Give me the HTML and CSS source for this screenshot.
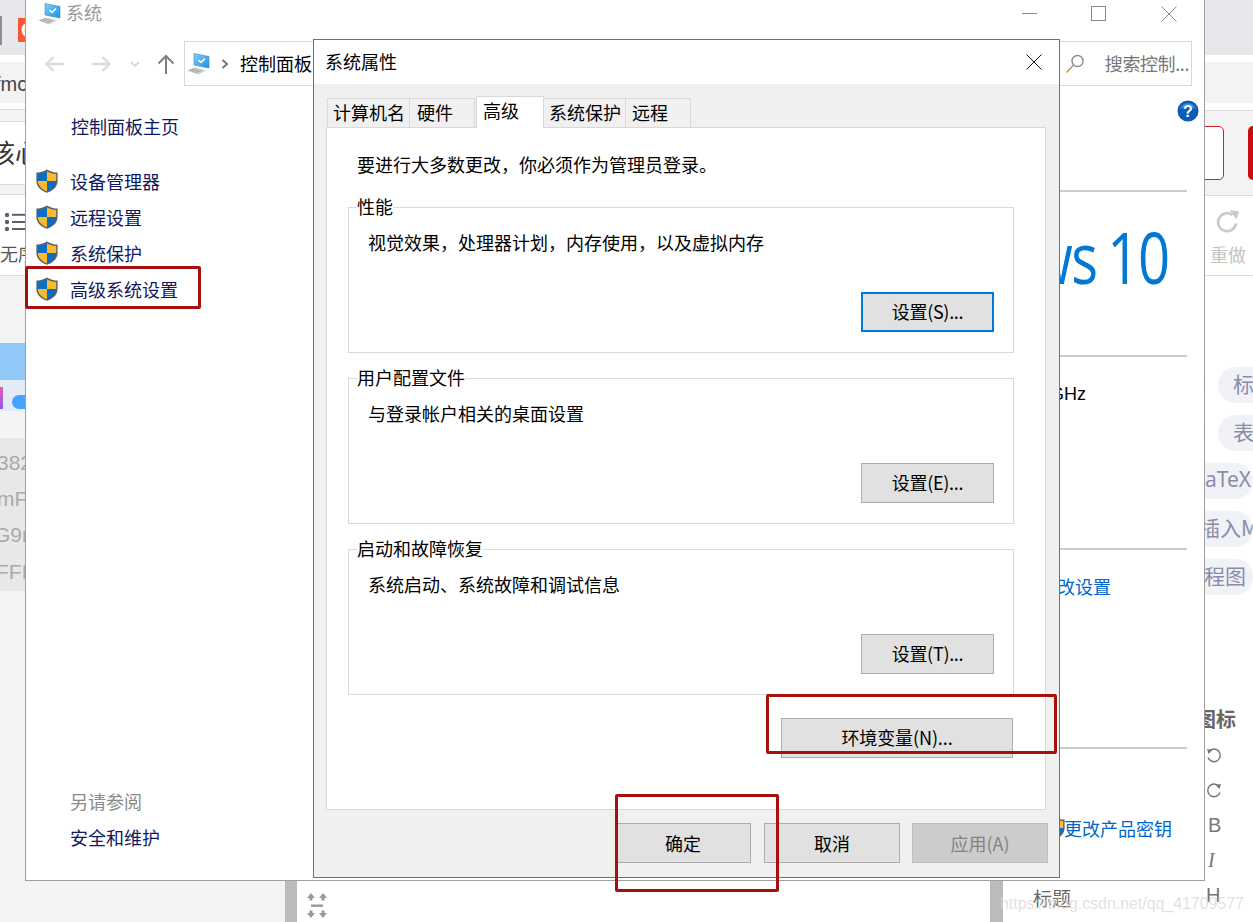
FILE: index.html
```html
<!DOCTYPE html>
<html lang="zh-CN">
<head>
<meta charset="utf-8">
<title>系统属性</title>
<link rel="stylesheet" href="styles.css">
</head>
<body>
<svg class="defs" width="0" height="0" aria-hidden="true">
  <defs>
    <linearGradient id="screen" x1="0" y1="0" x2="1" y2="1"><stop offset="0" stop-color="#7fd0fb"/><stop offset="1" stop-color="#1f8fe0"/></linearGradient>
    <symbol id="shield" viewBox="0 0 22 24">
      <path d="M11 .5C14 2.6 18 3.6 21.6 3.6V12C21.6 18 16.5 22 11 23.8 5.500 22 .4 18 .4 12V3.600C4 3.600 8 2.600 11 .5Z" fill="#5b5f66"/>
      <path d="M11 2.200C8.300 4 4.800 4.900 1.800 5V12H11Z" fill="#0a6ec4"/>
      <path d="M11 2.200C13.700 4 17.200 4.900 20.200 5V12H11Z" fill="#fbb92e"/>
      <path d="M1.800 12C1.900 17 6.500 20.800 11 22.300V12Z" fill="#fbb92e"/>
      <path d="M20.200 12C20.100 17 15.500 20.800 11 22.300V12Z" fill="#0a6ec4"/>
    </symbol>
    <symbol id="pc" viewBox="0 0 24 22">
      <path d="M1 17.500 9 14.500 20 17.500 12 21.500Z" fill="#c9ced2"/>
      <path d="M3 17.500 9 15.500 M6 18.500 12 16.500 M9 19.500 15 17.500" stroke="#8f979c" stroke-width=".8" fill="none"/>
      <path d="M8 .5 23 3.500V15L8 12Z" fill="url(#screen)" stroke="#3f86bd" stroke-width=".6"/>
      <path d="M12.500 7 15 9.500 19 5.500" stroke="#fff" stroke-width="1.500" fill="none"/>
    </symbol>
  </defs>
</svg>

<div class="backdrop">
  <div class="left-pane">
    <div class="band band-top">
      <span class="tab-edge"></span>
      <span class="app-badge">C</span>
    </div>
    <div class="band band-gap"></div>
    <div class="band band-url"><span class="url-text">fmc</span></div>
    <div class="band band-gap-line"></div>
    <div class="band band-thin"></div>
    <div class="band band-title"><span class="title-text">核心</span></div>
    <div class="band band-sep"></div>
    <div class="band band-tools">
      <svg class="list-icon" width="22" height="22" viewBox="0 0 22 22"><g fill="#5d6070"><circle cx="3" cy="4" r="2.200"/><circle cx="3" cy="11" r="2.200"/><circle cx="3" cy="18" r="2.200"/><rect x="8" y="2.800" width="14" height="2"/><rect x="8" y="10" width="14" height="2"/><rect x="8" y="17" width="14" height="2"/></g></svg>
      <span class="tool-label">无序</span>
    </div>
    <div class="band band-pale"></div>
    <div class="pic">
      <div class="pic-sky"></div>
      <div class="pic-notes"><span class="note-a"></span><span class="note-b"></span></div>
    </div>
    <div class="band band-pale-2"></div>
    <div class="code">
      <div class="code-line">382</div>
      <div class="code-line">mF</div>
      <div class="code-line code-g">G9r</div>
      <div class="code-line code-f">FFF</div>
    </div>
  </div>
  <div class="scrollbar"></div>
  <div class="center-pane">
    <svg class="fit-icon" width="22" height="26" viewBox="0 0 22 26"><g fill="#999"><path d="M5 0 9 5H6.500V7.500H3.500V5H1Z"/><path d="M17 0 21 5H18.500V7.500H15.500V5H13Z"/><rect x="5" y="11.500" width="12" height="2.400"/><path d="M5 25 9 20H6.500V17.500H3.500V20H1Z"/><path d="M17 25 21 20H18.500V17.500H15.500V20H13Z"/></g></svg>
  </div>
  <div class="scrollbar scrollbar-r"></div>
  <div class="right-pane">
    <div class="rband rband-top"></div>
    <div class="rband rband-gap"></div>
    <div class="rband rband-url"></div>
    <div class="rband rband-gap2"></div>
    <div class="rband rband-actions">
      <span class="btn-outline"></span>
      <span class="btn-solid"></span>
    </div>
    <div class="rband rband-tools">
      <svg class="redo" width="24" height="24" viewBox="0 0 24 24"><path d="M20 13.500A9 9 0 1 1 16.500 5" fill="none" stroke="#c8cad0" stroke-width="2.600"/><path d="M13.500 0 23 1.500 20.500 9.500Z" fill="#c8cad0"/></svg>
      <span class="redo-label">重做</span>
    </div>
    <div class="pills">
      <div class="pill-row"><span class="pill pill-blank"></span><span class="pill pill-short">标题</span></div>
      <div class="pill-row"><span class="pill pill-blank"></span><span class="pill pill-short">表格</span></div>
      <div class="pill-row"><span class="pill pill-wide pill-latex">LaTeX</span></div>
      <div class="pill-row"><span class="pill pill-wide pill-insert">插入Mermaid</span></div>
      <div class="pill-row"><span class="pill pill-wide pill-flow">流程图</span></div>
    </div>
    <div class="icon-head">图标</div>
    <ul class="icon-list">
      <li><svg width="16" height="16" viewBox="0 0 16 16"><path d="M3 3.500A6.300 6.300 0 1 1 2 9.500" fill="none" stroke="#777" stroke-width="1.500"/><path d="M1 1 6.500 2 2.500 6Z" fill="#777"/></svg></li>
      <li><svg width="16" height="16" viewBox="0 0 16 16"><path d="M13 3.500A6.300 6.300 0 1 0 14 9.500" fill="none" stroke="#777" stroke-width="1.500"/><path d="M15 1 9.500 2 13.500 6Z" fill="#777"/></svg></li>
      <li class="glyph">B</li>
      <li class="glyph glyph-i">I</li>
    </ul>
    <div class="last-row"><span class="last-title">标题</span><span class="glyph last-h">H</span></div>
  </div>
</div>

<section class="window">
  <header class="win-title">
    <div class="win-name">
      <svg class="pc-small" width="24" height="22"><use href="#pc"/></svg>
      <span>系统</span>
    </div>
    <div class="win-controls">
      <span class="ctl ctl-min"></span>
      <span class="ctl ctl-max"></span>
      <svg class="ctl-close" width="16" height="16" viewBox="0 0 16 16"><path d="M.5.500 15.500 15.500M15.500.500.500 15.500" stroke="#8a8a8a" fill="none"/></svg>
    </div>
  </header>
  <nav class="win-nav">
    <div class="nav-btns">
      <svg width="20" height="18" viewBox="0 0 20 18"><path d="M19 9H2M8.500 2 1.500 9 8.500 16" fill="none" stroke="#dcdcdc" stroke-width="2.400"/></svg>
      <svg class="nav-fwd" width="20" height="18" viewBox="0 0 20 18"><path d="M1 9H18M11.500 2 18.500 9 11.500 16" fill="none" stroke="#dcdcdc" stroke-width="2.400"/></svg>
      <svg class="nav-down" width="10" height="6" viewBox="0 0 10 6"><path d="M1 1 5 5 9 1" fill="none" stroke="#dcdcdc" stroke-width="2"/></svg>
      <svg class="nav-up" width="18" height="20" viewBox="0 0 18 20"><path d="M9 20V2M1.500 9.500 9 2 16.500 9.500" fill="none" stroke="#808080" stroke-width="2"/></svg>
    </div>
    <div class="addr">
      <svg width="24" height="22"><use href="#pc"/></svg>
      <svg class="addr-chev" width="8" height="10" viewBox="0 0 8 10"><path d="M1.500 1 6 5 1.500 9" fill="none" stroke="#777" stroke-width="2"/></svg>
      <span class="addr-text">控制面板</span>
    </div>
    <div class="search">
      <svg width="20" height="20" viewBox="0 0 20 20"><circle cx="12.500" cy="7" r="5.500" fill="none" stroke="#8b8b8b" stroke-width="1.400"/><path d="M8.500 11 1.500 18.500" stroke="#c98a4c" stroke-width="1.400"/></svg>
      <span class="search-text">搜索控制...</span>
    </div>
  </nav>
  <div class="win-body">
    <aside class="side">
      <a class="side-home">控制面板主页</a>
      <ul class="side-list">
        <li><svg width="22" height="24"><use href="#shield"/></svg>设备管理器</li>
        <li><svg width="22" height="24"><use href="#shield"/></svg>远程设置</li>
        <li><svg width="22" height="24"><use href="#shield"/></svg>系统保护</li>
        <li><svg width="22" height="24"><use href="#shield"/></svg>高级系统设置</li>
      </ul>
      <div class="side-foot">
        <div class="foot-head">另请参阅</div>
        <div class="foot-link">安全和维护</div>
      </div>
    </aside>
    <div class="info">
      <div class="info-sec info-help">
        <svg class="help" width="22" height="22" viewBox="0 0 22 22"><circle cx="11" cy="11" r="10.500" fill="#0a5cb5"/><path d="M3 9A8.500 8.500 0 0 1 19 9C14 6.500 8 6.500 3 9Z" fill="#3e8bdc"/><text x="11" y="17" text-anchor="middle" class="help-q">?</text></svg>
      </div>
      <div class="info-sec info-logo"><span class="logo-text">ws<span class="logo-num">10</span></span></div>
      <div class="info-sec info-cpu"><span class="ghz">GHz</span></div>
      <div class="info-sec info-name"><a class="change-link">更改设置</a></div>
      <div class="info-last">
        <svg class="key-shield" width="22" height="24"><use href="#shield"/></svg>
        <a class="key-link">更改产品密钥</a>
      </div>
    </div>
  </div>
</section>

<section class="dialog">
  <header class="dlg-title">
    <span class="dlg-name">系统属性</span>
    <svg width="16" height="16" viewBox="0 0 16 16"><path d="M.5.500 15.500 15.500M15.500.500.500 15.500" stroke="#111" fill="none"/></svg>
  </header>
  <div class="dlg-body">
    <div class="tabs">
      <span class="tab tab-first">计算机名</span>
      <span class="tab tab-hw">硬件</span>
      <span class="tab tab-active">高级</span>
      <span class="tab tab-sys">系统保护</span>
      <span class="tab tab-remote">远程</span>
    </div>
    <div class="panel">
      <p class="admin-note">要进行大多数更改，你必须作为管理员登录。</p>
      <div class="group group-first">
        <div class="legend">性能</div>
        <p class="desc">视觉效果，处理器计划，内存使用，以及虚拟内存</p>
        <button class="btn btn-group btn-focus">设置(S)...</button>
      </div>
      <div class="group">
        <div class="legend">用户配置文件</div>
        <p class="desc">与登录帐户相关的桌面设置</p>
        <button class="btn btn-group">设置(E)...</button>
      </div>
      <div class="group">
        <div class="legend">启动和故障恢复</div>
        <p class="desc">系统启动、系统故障和调试信息</p>
        <button class="btn btn-group">设置(T)...</button>
      </div>
      <div class="env-row"><button class="btn btn-env">环境变量(N)...</button></div>
    </div>
    <div class="dlg-foot">
      <button class="btn btn-foot">确定</button>
      <button class="btn btn-foot">取消</button>
      <button class="btn btn-foot btn-disabled">应用(A)</button>
    </div>
  </div>
</section>

<div class="mark mark-side"></div>
<div class="mark mark-env"></div>
<div class="mark mark-ok"></div>
<div class="watermark">https://blog.csdn.net/qq_41709577</div>
</body>
</html>
```
FILE: styles.css
```css
* { box-sizing: border-box; }
html, body { margin: 0; padding: 0; }
body {
  width: 1253px;
  height: 922px;
  position: relative;
  overflow: hidden;
  background: #fff;
  color: #000;
  font-family: "Noto Sans CJK SC", "Noto Sans", sans-serif;
  font-size: 18px;
  line-height: 26px;
}
p { margin: 0; }
ul { margin: 0; padding: 0; list-style: none; }
.defs { position: absolute; }

/* page behind the windows */
.backdrop { display: grid; grid-template-columns: 285px 12px 693px 13px 250px; height: 922px; }
.left-pane { background: #f4f4f4; overflow: hidden; }
.scrollbar { background: #bbb; }
.center-pane { background: #fff; padding: 893px 0 0 9px; }
.fit-icon { display: block; }
.right-pane { background: #fff; overflow: hidden; }

.band { width: 25px; overflow: hidden; }
.band-top { height: 55px; background: #e6e8eb; position: relative; display: flex; justify-content: space-between; padding-top: 16px; }
.tab-edge { width: 2px; height: 29px; background: #8c8c8c; }
.app-badge { width: 7px; height: 24px; margin-top: 2px; background: #fc5531; color: #fff; font: 700 20px/24px "Liberation Sans", sans-serif; text-indent: 3px; overflow: hidden; }
.band-gap { height: 7px; background: #fff; }
.band-url { height: 41px; background: #f3f3f3; }
.url-text { display: block; font: 20px/44px "Liberation Sans", sans-serif; color: #444; margin-left: -5px; white-space: nowrap; }
.band-gap-line { height: 7px; background: #fff; border-bottom: 1px solid #ddd; }
.band-thin { height: 12px; background: #f3f3f3; border-bottom: 1px solid #ddd; }
.band-title { height: 62px; background: #fff; }
.title-text { display: block; margin-left: -11px; font-size: 26px; line-height: 60px; color: #333; white-space: nowrap; }
.band-sep { height: 11px; background: #f3f3f3; border-top: 1px solid #ddd; border-bottom: 1px solid #ddd; }
.band-tools { height: 80px; background: #fff; padding: 16px 0 0 4px; }
.list-icon { display: block; }
.tool-label { display: block; margin: 8px 0 0 -4px; font-size: 18px; line-height: 24px; color: #555; white-space: nowrap; }
.band-pale { height: 65px; background: #f3f3f3; border-top: 1px solid #ddd; }
.pic { width: 25px; height: 68px; margin-top: 3px; overflow: hidden; background: #e3ecf6; }
.pic-sky { height: 37px; background: #90c8f8; }
.pic-notes { display: flex; justify-content: space-between; align-items: flex-end; height: 31px; padding-bottom: 2px; }
.note-a { width: 3px; height: 22px; background: linear-gradient(#e85ab0, #8a5cf0); }
.note-b { width: 13px; height: 14px; margin-right: 0; background: #46a3fb; border-radius: 8px 0 0 8px; }
.band-pale-2 { height: 27px; width: 25px; }
.code { width: 25px; height: 153px; background: #e8e8e8; overflow: hidden; padding-top: 7px; }
.code-line { height: 36.200px; font: 21px/36px "Liberation Sans", sans-serif; color: #aaa; white-space: nowrap; margin-left: -3px; }
.code-g { margin-left: -6px; }
.code-f { margin-left: -4px; }

.rband { width: 100%; }
.rband-top { height: 55px; background: #e6e8eb; }
.rband-gap { height: 7px; }
.rband-url { height: 41px; background: #f3f3f3; }
.rband-gap2 { height: 8px; border-bottom: 1px solid #ddd; }
.rband-actions { height: 85px; background: #f3f3f3; border-bottom: 1px solid #ddd; padding: 15px 0 0 147px; display: flex; gap: 24px; }
.btn-outline { flex: none; width: 74px; height: 54px; background: #fff; border: 1px solid #d0202e; border-radius: 5px; }
.btn-solid { flex: none; width: 40px; height: 54px; background: #ca0c16; border-radius: 5px; }
.rband-tools { height: 80px; border-bottom: 1px solid #ddd; padding: 14px 0 0 213px; position: relative; }
.redo { display: block; }
.redo-label { display: block; margin: 7px 0 0 -6px; color: #c4c4c4; font-size: 18px; line-height: 26px; white-space: nowrap; }
.pills { display: flex; flex-direction: column; gap: 12px; margin-top: 91px; }
.pill-row { display: flex; gap: 12px; height: 36px; padding-left: 97px; }
.pill { flex: none; height: 36px; background: #f0f2f7; color: #8a8da8; border-radius: 18px; font-size: 21px; line-height: 33px; white-space: nowrap; overflow: hidden; }
.pill-blank { width: 106px; background: #f7f8fb; }
.pill-short { width: 80px; padding-left: 15px; }
.pill-wide { width: 153px; }
.pill-latex { padding-left: 94px; font-family: "Noto Sans", sans-serif; }
.pill-insert { padding-left: 99px; }
.pill-flow { padding-left: 83px; }
.icon-head { margin: 112px 0 0 193px; font-size: 20px; font-weight: 700; line-height: 24px; color: #666; white-space: nowrap; }
.icon-list { margin: 7px 0 0 203px; }
.icon-list li { height: 35px; display: flex; align-items: center; }
.glyph { font: 20px/35px "Liberation Sans", sans-serif; color: #777; padding-left: 2px; }
.glyph-i { font-family: "Liberation Serif", serif; font-style: italic; }
.last-row { display: flex; padding-left: 30px; height: 30px; margin-top: 4px; }
.last-title { font-size: 19px; line-height: 32px; color: #666; }
.last-h { margin-left: 133px; line-height: 26px; }

/* control panel window */
.window {
  position: absolute; left: 25px; top: 0;
  width: 1180px; height: 881px;
  background: #fff;
  border: 1px solid #a0a0a0;
  border-top: 0;
  display: flex; flex-direction: column;
}
.win-title { height: 41px; flex: none; display: flex; justify-content: space-between; padding: 0 27px 0 11px; }
.win-name { display: flex; gap: 5px; color: #999; font-size: 18px; line-height: 24px; align-items: flex-start; }
.pc-small { margin-top: 3px; }
.win-controls { display: flex; align-items: flex-start; padding-top: 6px; }
.ctl { display: block; flex: none; }
.ctl-min { width: 15px; height: 1px; background: #8a8a8a; margin-top: 7px; }
.ctl-max { width: 15px; height: 15px; border: 1px solid #8a8a8a; margin-left: 54px; }
.ctl-close { margin-left: 55px; }
.win-nav { height: 45px; flex: none; display: flex; padding: 0 12px 0 19px; }
.nav-btns { display: flex; align-items: center; width: 139px; flex: none; }
.nav-fwd { margin-left: 26px; }
.nav-down { margin-left: 19px; }
.nav-up { margin-left: 17px; }
.addr { flex: 1; border: 1px solid #d9d9d9; display: flex; align-items: center; padding-left: 1px; line-height: 26px; font-size: 18px; }
.addr-chev { margin: 0 11px; }
.addr-text { margin-bottom: 2px; }
.search { width: 140px; flex: none; border: 1px solid #d9d9d9; border-left: 0; display: flex; align-items: center; justify-content: flex-end; padding-right: 2px; gap: 20px; color: #777; white-space: nowrap; }
.search-text { font-size: 18px; margin-bottom: 2px; letter-spacing: -.4px; }
.win-body { flex: 1; display: flex; min-height: 0; justify-content: space-between; }

.side { width: 288px; flex: none; display: flex; flex-direction: column; padding: 22px 0 25px 10px; color: #10185e; }
.side-home { display: block; margin-left: 35px; line-height: 36px; }
.side-list { margin-top: 20px; }
.side-list li { height: 36px; display: flex; align-items: center; gap: 12px; padding-bottom: 2px; }
.side-list svg { margin-top: 0; }
.side-foot { margin-top: auto; padding-left: 34px; }
.foot-head { color: #8a8a8a; line-height: 35px; }
.foot-link { line-height: 36px; }

.info { width: 144px; flex: none; padding-right: 17px; display: flex; flex-direction: column; }
.info-sec { border-bottom: 2px solid #ccc; flex: none; }
.info-help { height: 106px; padding-top: 14px; display: flex; justify-content: flex-end; margin-right: 0; }
.help { margin-right: -12px; }
.help-q { font: 700 16px "Liberation Sans", sans-serif; fill: #fff; }
.info-logo { height: 165px; display: flex; justify-content: flex-end; padding-right: 19px; color: #0078d4; overflow: hidden; }
.logo-text { display: block; flex: none; font-family: "Open Sans", sans-serif; font-weight: 400; font-size: 72px; line-height: 128px; white-space: nowrap; letter-spacing: -2px; transform: scaleX(.78); transform-origin: right center; }
.logo-num { margin-left: 14px; }
.info-cpu { height: 193px; padding-top: 24px; }
.ghz { display: block; font: 18px/26px "Liberation Sans", sans-serif; margin-left: -10px; }
.info-name { height: 199px; padding-top: 23px; }
.change-link { color: #0066cc; white-space: nowrap; margin-left: -21px; display: block; }
.info-last { display: flex; align-items: center; padding-top: 66px; }
.key-shield { flex: none; margin-left: -17px; }
.key-link { color: #0066cc; white-space: nowrap; line-height: 26px; margin-left: -1px; }

/* system properties dialog */
.dialog {
  position: absolute; left: 313px; top: 39px;
  width: 747px; height: 839px;
  border: 1px solid #707070;
  background: #f0f0f0;
  display: flex; flex-direction: column;
}
.dlg-title { height: 44px; flex: none; background: #fff; display: flex; align-items: center; justify-content: space-between; padding: 0 17px 0 11px; font-size: 18px; }
.dlg-name { margin-bottom: 2px; }
.dlg-body { flex: 1; padding: 14px 0 0 12px; display: flex; flex-direction: column; }
.tabs { display: flex; height: 29px; flex: none; padding-left: 1px; position: relative; z-index: 1; }
.tab { display: block; height: 30px; border: 1px solid #d9d9d9; border-left: 0; background: #f0f0f0; line-height: 26px; white-space: nowrap; }
.tab-first { width: 83px; border-left: 1px solid #d9d9d9; padding-left: 5px; }
.tab-hw { width: 65px; padding-left: 7px; }
.tab-active { width: 68px; height: 32px; margin-top: -2px; margin-left: 1px; background: #fff; border-bottom: 0; border-left: 1px solid #d9d9d9; padding-left: 6px; }
.tab-sys { width: 82px; padding-left: 5px; }
.tab-remote { width: 65px; padding-left: 6px; }
.panel { width: 720px; height: 683px; background: #fff; border: 1px solid #d9d9d9; padding: 23px 31px 0 21px; flex: none; }
.admin-note { margin-left: 9px; line-height: 26px; }
.group { display: flex; flex-direction: column; height: 146px; margin-top: 25px; border: 1px solid #d9d9d9; padding: 0 19px 20px 0; }
.group-first { margin-top: 30px; }
.legend { width: fit-content; margin: -14px 0 0 8px; line-height: 24px; background: #fff; }
.desc { margin: 11px 0 0 19px; line-height: 26px; }
.btn { font-family: inherit; font-size: 18px; line-height: 24px; padding: 0; background: #e1e1e1; border: 1px solid #adadad; color: #000; }
.btn-group { width: 133px; height: 40px; margin: auto 0 0 auto; padding-bottom: 2px; letter-spacing: -.3px; }
.btn-focus { border: 2px solid #0078d7; }
.env-row { display: flex; justify-content: flex-end; margin: 23px 1px 0 0; }
.btn-env { width: 232px; height: 40px; padding-bottom: 2px; letter-spacing: -.1px; }
.dlg-foot { display: flex; gap: 13px; margin-top: 13px; padding-left: 289px; }
.btn-foot { flex: none; width: 136px; height: 40px; }
.btn-disabled { background: #ccc; border-color: #bfbfbf; color: #838383; margin-left: -1px; }

/* annotations drawn over the screenshot */
.mark { position: absolute; border: 3px solid #a80f0f; border-radius: 2px; }
.mark-side { left: 25px; top: 266px; width: 176px; height: 43px; }
.mark-env { left: 766px; top: 694px; width: 291px; height: 60px; }
.mark-ok { left: 615px; top: 794px; width: 164px; height: 98px; }
.watermark { position: absolute; left: 1000px; top: 892px; font: 15.900px/24px "Liberation Sans", sans-serif; color: rgba(215, 215, 215, .75); white-space: nowrap; }
```
